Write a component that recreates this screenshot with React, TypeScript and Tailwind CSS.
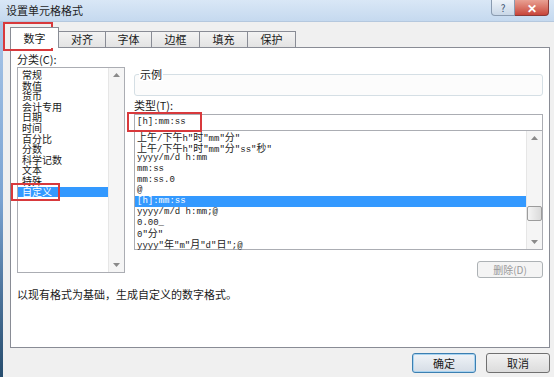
import React from 'react';

const ui = { fontFamily: '"Noto Sans CJK SC", "Noto Sans", sans-serif' };
const mono = { fontFamily: '"Liberation Mono", "Noto Sans CJK SC", monospace' };

const categories = ['常规', '数值', '货币', '会计专用', '日期', '时间', '百分比', '分数', '科学记数', '文本', '特殊', '自定义'];

const formats = [
  '上午/下午h"时"mm"分"',
  '上午/下午h"时"mm"分"ss"秒"',
  'yyyy/m/d h:mm',
  'mm:ss',
  'mm:ss.0',
  '@',
  '[h]:mm:ss',
  'yyyy/m/d h:mm;@',
  '0.00_',
  '0"分"',
  'yyyy"年"m"月"d"日";@',
];

// CJK runs get a bigger face than the narrow mono latin
function Mixed({ text }: { text: string }) {
  const parts = text.split(/([\u3000-\u9fff\uff00-\uffef]+)/);
  return (
    <>
      {parts.map((p, i) =>
        /[\u3000-\u9fff\uff00-\uffef]/.test(p) ? (
          <span key={i} className="text-[10px] leading-[10px]" style={ui}>
            {p}
          </span>
        ) : (
          <span key={i}>{p}</span>
        )
      )}
    </>
  );
}

function Arrow({ up }: { up?: boolean }) {
  return (
    <svg width="7" height="4" viewBox="0 0 7 4">
      <path d={up ? 'M0 4 L3.5 0 L7 4 Z' : 'M0 0 L3.5 4 L7 0 Z'} fill="#8a8a8a" />
    </svg>
  );
}

function ScrollBar({ thumb }: { thumb?: boolean }) {
  return (
    <div className="w-[16px] h-full flex flex-col items-center justify-between bg-[#f5f5f5] border-l border-[#e6e6e6] py-[5px]">
      <Arrow up />
      {thumb && (
        <div className="w-[15px] h-[15px] mt-[66px] rounded-[2px] border border-[#9c9c9c] bg-gradient-to-r from-[#f4f4f4] to-[#dadada]" />
      )}
      <div className="flex-1" />
      <Arrow />
    </div>
  );
}

export default function App() {
  return (
    <div className="w-[554px] h-[377px] bg-[#f0f0f0] relative overflow-hidden flex flex-col text-[#1a1a1a]" style={ui}>
      {/* title bar */}
      <div className="h-[22px] flex justify-between items-start bg-gradient-to-b from-[#d9e7f6] to-[#c5d9ef] border-b border-[#b5c8de]">
        <span className="pl-[6px] pt-[3px] text-[11px] leading-[14px] text-[#1e1e1e]">设置单元格格式</span>
        <div className="flex pr-[5px]">
          <div className="w-[24px] h-[16px] flex items-center justify-center rounded-bl-[4px] border border-t-0 border-[#8a9bb0] bg-gradient-to-b from-[#eef3f9] to-[#c9d7e7] text-[10px] text-[#3d5370] leading-none">
            ?
          </div>
          <div className="w-[34px] h-[16px] flex items-center justify-center rounded-br-[4px] border border-t-0 border-l-0 border-[#8b3a37] bg-gradient-to-b from-[#e8a093] to-[#c7443a] text-white text-[12px] font-bold leading-none">
            ✕
          </div>
        </div>
      </div>

      <div className="flex flex-1">
        <div className="w-[3px] bg-gradient-to-b from-[#a9c6e8] via-[#7aa3d2] to-[#274d6e]" />
        <div className="pl-[7px] flex flex-col">
          {/* tabs */}
          <div className="h-[25px] flex items-end text-[11px]">
            <div className="w-[49px] h-[21px] -mb-px relative z-10 bg-white border border-b-0 border-[#898c95] flex items-center justify-center">
              数字
            </div>
            {[
              ['对齐', 'w-[47px]'],
              ['字体', 'w-[46px]'],
              ['边框', 'w-[48px]'],
              ['填充', 'w-[48px]'],
              ['保护', 'w-[48px]'],
            ].map(([t, w]) => (
              <div
                key={t}
                className={`${w} h-[16px] border-t border-r border-[#898c95] bg-gradient-to-b from-[#f3f3f3] to-[#e3e3e3] flex items-center justify-center`}
              >
                {t}
              </div>
            ))}
          </div>

          {/* panel */}
          <div className="w-[540px] h-[301px] border border-[#898c95] bg-white flex flex-col">
            <div className="flex">
              {/* category column */}
              <div className="ml-[6px] w-[108px] flex flex-col">
                <div className="mt-[4px] h-[15px] leading-[15px] text-[11px]">分类(C):</div>
                <div className="h-[206px] border border-[#abadb3] flex">
                  <div className="flex-1 pt-[2px] text-[10px] leading-[10.6px]">
                    {categories.map((c) => (
                      <div
                        key={c}
                        className={`h-[10.6px] pl-[4px] whitespace-nowrap ${c === '自定义' ? 'bg-[#3399ff] text-white' : ''}`}
                      >
                        {c}
                      </div>
                    ))}
                  </div>
                  <ScrollBar />
                </div>
              </div>

              {/* type column */}
              <div className="ml-[9px] w-[409px] flex flex-col">
                <div className="mt-[26px] h-[22px] relative border border-[#d5dfe5] rounded-[3px] bg-[#fcfcfc]">
                  <span className="absolute left-[4px] -top-[8px] px-[1px] bg-white text-[11px] leading-[14px]">示例</span>
                </div>
                <div className="mt-[2px] h-[14px] leading-[14px] text-[11px]">类型(T):</div>
                <div className="mt-[2px] h-[17px] border border-[#abadb3] flex items-center pl-[2px] text-[9px]" style={mono}>
                  [h]:mm:ss
                </div>
                <div className="h-[119px] border border-t-0 border-[#abadb3] flex">
                  <div className="flex-1 pt-[1px] text-[9px] leading-[10.7px]" style={mono}>
                    {formats.map((f) => (
                      <div
                        key={f}
                        className={`h-[10.7px] pl-[2px] whitespace-nowrap ${f === '[h]:mm:ss' ? 'bg-[#3399ff] text-white' : ''}`}
                      >
                        <Mixed text={f} />
                      </div>
                    ))}
                  </div>
                  <ScrollBar thumb />
                </div>
                <div className="ml-auto mt-[11px] w-[66px] h-[17px] rounded-[3px] border border-[#adb2b5] bg-[#f4f4f4] text-[#9a9a9a] text-[10px] flex items-center justify-center">
                  删除(D)
                </div>
              </div>
            </div>

            <div className="ml-[6px] mt-[9px] h-[14px] leading-[14px] text-[11px]">以现有格式为基础，生成自定义的数字格式。</div>
          </div>

          {/* dialog buttons */}
          <div className="mt-[5px] flex justify-end gap-[10px] text-[11px]">
            <div className="w-[64px] h-[20px] rounded-[3px] border border-[#3c7fb1] bg-gradient-to-b from-[#f0f4f8] to-[#d6dde6] flex items-center justify-center shadow-[inset_0_0_0_1px_#a8d3f0]">
              确定
            </div>
            <div className="w-[64px] h-[20px] rounded-[3px] border border-[#707070] bg-gradient-to-b from-[#f2f2f2] to-[#dcdcdc] flex items-center justify-center">
              取消
            </div>
          </div>
        </div>
      </div>

      {/* red annotation boxes */}
      <div className="absolute left-[3px] top-[22px] w-[50px] h-[29px] border-2 border-[#d8393c]" />
      <div className="absolute left-[11px] top-[183px] w-[49px] h-[18px] border-2 border-[#d8393c]" />
      <div className="absolute left-[127px] top-[112px] w-[75px] h-[20px] border-2 border-[#d8393c]" />
    </div>
  );
}
